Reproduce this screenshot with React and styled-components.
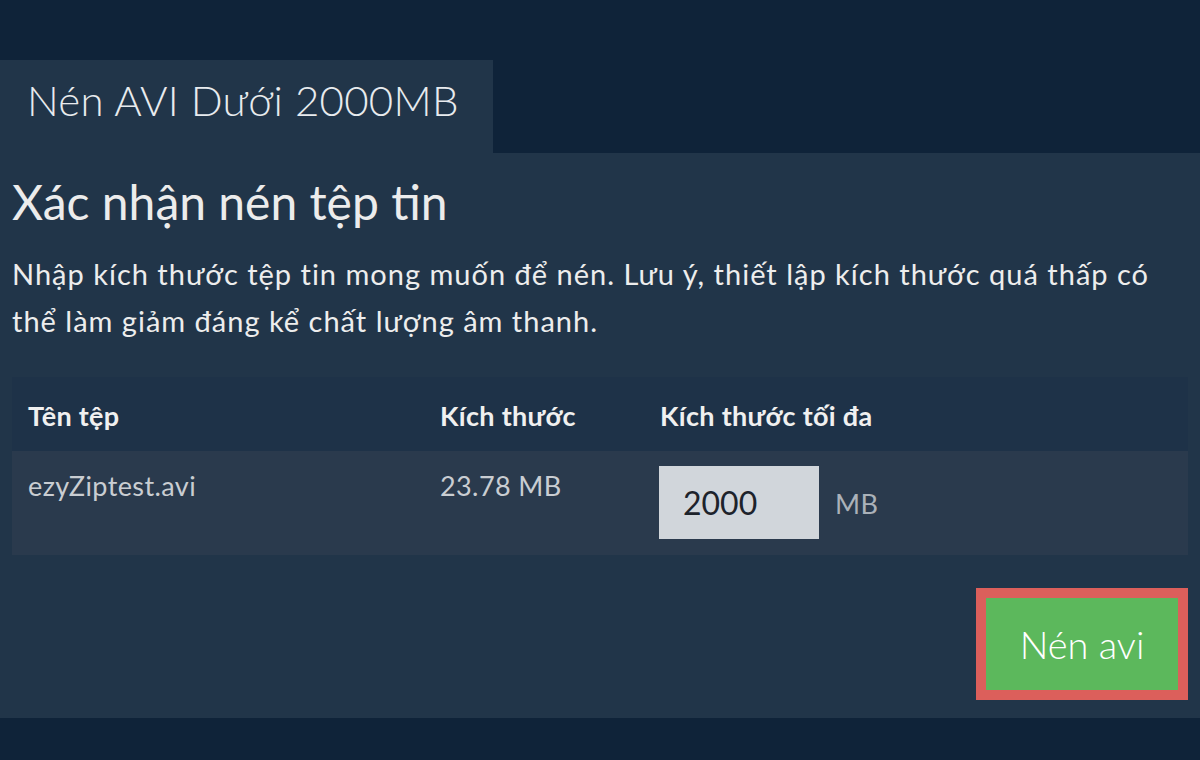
import React from "react";
import styled, { createGlobalStyle } from "styled-components";

const GlobalStyle = createGlobalStyle`
  * {
    box-sizing: border-box;
  }

  body {
    margin: 0;
    background: #0f2339;
    font-family: Lato, "Noto Sans", "Liberation Sans", sans-serif;
  }
`;

const App = () => {
  return (
    <Page>
      <GlobalStyle />
      <Tab>Nén AVI Dưới 2000MB</Tab>
      <Panel>
        <Heading>Xác nhận nén tệp tin</Heading>
        <Lead>
          Nhập kích thước tệp tin mong muốn để nén. Lưu ý, thiết lập kích
          thước quá thấp có thể làm giảm đáng kể chất lượng âm thanh.
        </Lead>

        <FileTable>
          <thead>
            <HeadRow>
              <HeadCell width="412px">Tên tệp</HeadCell>
              <HeadCell width="220px">Kích thước</HeadCell>
              <HeadCell>Kích thước tối đa</HeadCell>
            </HeadRow>
          </thead>
          <tbody>
            <BodyRow>
              <Cell>ezyZiptest.avi</Cell>
              <Cell>23.78 MB</Cell>
              <Cell>
                <SizeField>
                  <SizeInput type="text" defaultValue="2000" />
                  <Unit>MB</Unit>
                </SizeField>
              </Cell>
            </BodyRow>
          </tbody>
        </FileTable>

        <Actions>
          <CompressButton>Nén avi</CompressButton>
        </Actions>
      </Panel>
    </Page>
  );
};

export default App;

const Page = styled.div`
  width: 1200px;
  height: 760px;
  padding-top: 60px;
  overflow: hidden;
  background: #0f2339;
`;

const Tab = styled.div`
  width: 493px;
  height: 93px;
  padding: 15px 27px 0;
  background: #213549;
  color: #e8ebee;
  font-size: 42px;
  font-weight: 300;
  line-height: 1.2;
  letter-spacing: 0.3px;
  white-space: nowrap;
`;

const Panel = styled.div`
  height: 565px;
  padding: 20px 12px 0;
  background: #213549;
`;

const Heading = styled.h2`
  margin: 0;
  color: #ececec;
  font-size: 48px;
  font-weight: 400;
  line-height: 1.2;
`;

const Lead = styled.p`
  margin: 19px 0 0;
  color: #ededed;
  font-size: 29px;
  line-height: 47.6px;
  letter-spacing: 1px;
`;

const FileTable = styled.table`
  width: 100%;
  margin-top: 32px;
  border-collapse: collapse;
  table-layout: fixed;
`;

const HeadRow = styled.tr`
  background: #1e3248;
`;

const BodyRow = styled.tr`
  background: #2a3a4d;
`;

const HeadCell = styled.th`
  width: ${(p) => p.width || "auto"};
  height: 74px;
  padding: 20px 16px 16px;
  color: #f0f0f0;
  font-size: 27px;
  font-weight: 700;
  text-align: left;
  vertical-align: top;
  line-height: 38px;
  letter-spacing: 0.3px;
  white-space: nowrap;
`;

const Cell = styled.td`
  height: 103px;
  padding: 16px;
  color: #c9cdd2;
  font-size: 27px;
  line-height: 38.6px;
  letter-spacing: 0.4px;
  vertical-align: top;
  white-space: nowrap;
`;

const SizeField = styled.div`
  display: flex;
  align-items: center;
  gap: 16px;
  margin-top: -1px;
  margin-left: -1px;
`;

const SizeInput = styled.input`
  width: 160px;
  height: 73px;
  padding: 0 24px;
  border: none;
  outline: none;
  background: #d1d6db;
  color: #1d232b;
  font-family: Lato, "Noto Sans", sans-serif;
  font-size: 32px;
`;

const Unit = styled.span`
  margin-top: 4px;
  color: #aab1b9;
  font-size: 27px;
`;

const Actions = styled.div`
  display: flex;
  justify-content: flex-end;
  margin-top: 33px;
`;

const CompressButton = styled.button`
  width: 212px;
  height: 112px;
  border: 10px solid #dc5f5b;
  background: #5cb85c;
  color: #ffffff;
  font-family: Lato, "Noto Sans", sans-serif;
  font-size: 38px;
  font-weight: 300;
  cursor: pointer;
`;
